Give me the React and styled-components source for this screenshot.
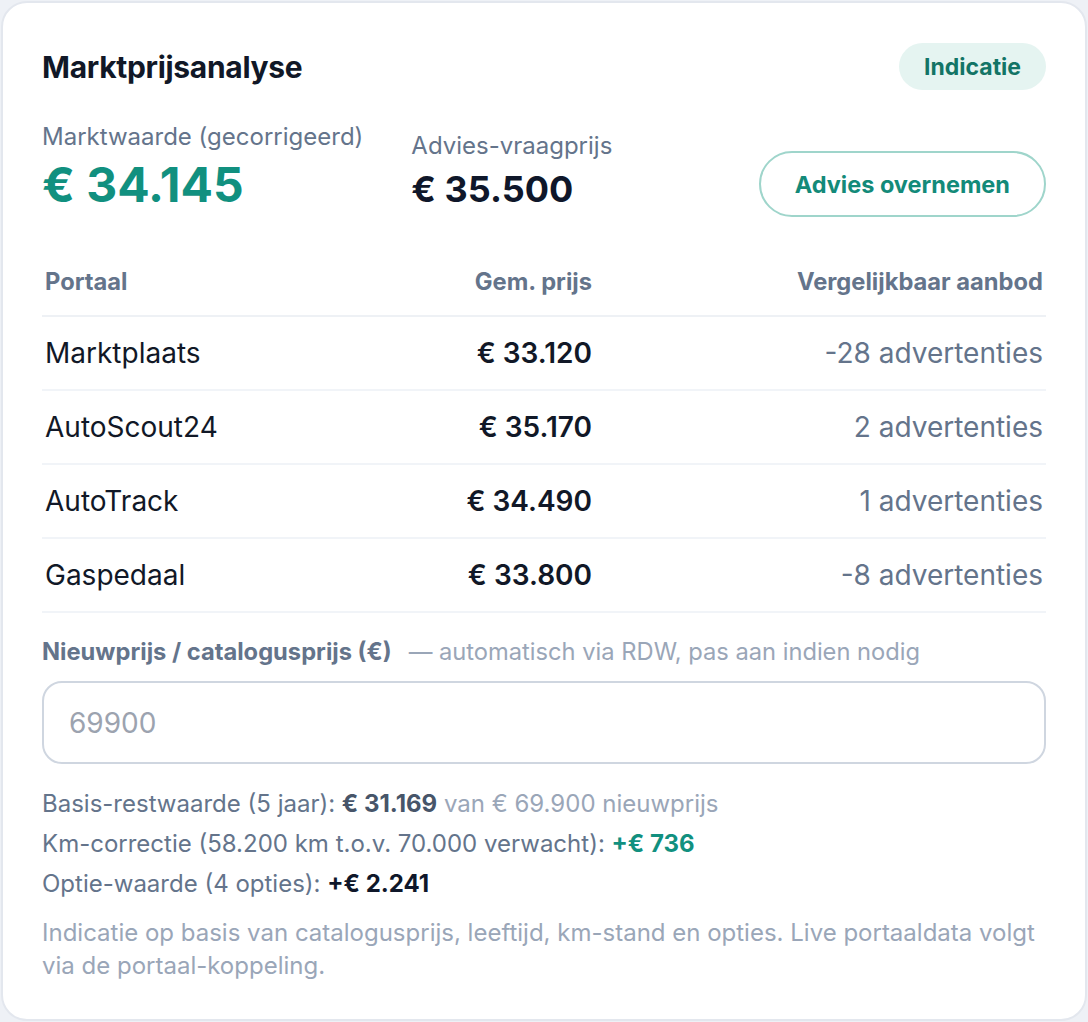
import React from "react";
import styled, { createGlobalStyle } from "styled-components";

const GlobalStyle = createGlobalStyle`
  * { box-sizing: border-box; }
  html, body { margin: 0; padding: 0; background: #eef1f6; }
  body { font-family: Inter, "Noto Sans", "Liberation Sans", sans-serif; color: #0f172a; }
`;

const Card = styled.section`
  width: 1086px;
  margin: 1px;
  background: #ffffff;
  border: 2px solid #e3e7ee;
  border-radius: 26px;
  padding: 40px 39px 37px;
`;

const Header = styled.header`
  display: flex;
  align-items: center;
  justify-content: space-between;
`;

const Title = styled.h2`
  margin: 0;
  font-size: 30px;
  font-weight: 700;
  letter-spacing: -0.3px;
  color: #111827;
`;

const Badge = styled.span`
  display: inline-flex;
  align-items: center;
  height: 47px;
  padding: 0 25px;
  border-radius: 999px;
  background: #e5f4f1;
  color: #137466;
  font-size: 23px;
  font-weight: 700;
`;

const Summary = styled.div`
  display: flex;
  align-items: flex-end;
  gap: 48px;
  margin-top: 32px;
`;

const Figure = styled.div`
  display: flex;
  flex-direction: column;
`;

const FigureLabel = styled.span`
  font-size: 24px;
  color: #64748b;
  line-height: 30px;
`;

const FigureValue = styled.span`
  font-size: ${(p) => (p.$large ? "48px" : "36px")};
  font-weight: 700;
  color: ${(p) => (p.$accent ? "#11907f" : "#0f172a")};
  line-height: ${(p) => (p.$large ? "65px" : "56px")};
`;

const Push = styled.div`
  flex: 1;
`;

const OutlineButton = styled.button`
  height: 66px;
  padding: 0 34px;
  border-radius: 999px;
  border: 2px solid #9fd5cb;
  background: #ffffff;
  color: #138a79;
  font-family: inherit;
  font-size: 23.5px;
  font-weight: 700;
  cursor: pointer;
`;

const Table = styled.div`
  margin-top: 32px;
  display: grid;
  grid-template-columns: minmax(0, 1fr) 200px 451px;
`;

const HeadCell = styled.div`
  padding: 18px 3px;
  line-height: 30px;
  font-size: 23.7px;
  font-weight: 700;
  color: #64748b;
  text-align: ${(p) => p.$align || "left"};
  border-bottom: 2px solid #eef1f5;
`;

const Cell = styled.div`
  height: 74px;
  display: flex;
  align-items: center;
  justify-content: ${(p) => (p.$align === "right" ? "flex-end" : "flex-start")};
  padding: 0 3px;
  font-size: 28px;
  font-weight: ${(p) => (p.$strong ? 600 : 400)};
  color: ${(p) => (p.$muted ? "#64748b" : "#111827")};
  border-bottom: 2px solid #f1f4f8;
`;

const FieldLabel = styled.div`
  margin-top: 24px;
  font-size: 23.7px;
  line-height: 30px;
  color: #64748b;
  font-weight: 700;
`;

const Hint = styled.span`
  margin-left: 17px;
  font-weight: 400;
  color: #9aa6b8;
`;

const PriceInput = styled.input`
  display: block;
  width: 100%;
  height: 83px;
  margin-top: 14px;
  padding: 0 25px;
  border: 2px solid #cfd6e0;
  border-radius: 20px;
  font-family: inherit;
  font-size: 28px;
  color: #0f172a;
  outline: none;
  &::placeholder { color: #9ca3af; }
`;

const Breakdown = styled.div`
  margin-top: 20px;
  display: flex;
  flex-direction: column;
`;

const Line = styled.div`
  font-size: 24px;
  line-height: 40px;
  color: #64748b;
`;

const Amount = styled.strong`
  font-weight: 700;
  color: ${(p) => p.$tone === "accent" ? "#11907f" : p.$tone === "dark" ? "#0f172a" : "#475569"};
`;

const Faint = styled.span`
  color: #9aa6b8;
`;

const Note = styled.p`
  margin: 12px 0 0;
  font-size: 24px;
  line-height: 33px;
  color: #9aa6b8;
`;

const portals = [
  { name: "Marktplaats", price: "€ 33.120", offers: "-28 advertenties" },
  { name: "AutoScout24", price: "€ 35.170", offers: "2 advertenties" },
  { name: "AutoTrack", price: "€ 34.490", offers: "1 advertenties" },
  { name: "Gaspedaal", price: "€ 33.800", offers: "-8 advertenties" },
];

export default function App() {
  return (
    <>
      <GlobalStyle />
      <Card>
        <Header>
          <Title>Marktprijsanalyse</Title>
          <Badge>Indicatie</Badge>
        </Header>

        <Summary>
          <Figure>
            <FigureLabel>Marktwaarde (gecorrigeerd)</FigureLabel>
            <FigureValue $large $accent>€ 34.145</FigureValue>
          </Figure>
          <Figure>
            <FigureLabel>Advies-vraagprijs</FigureLabel>
            <FigureValue>€ 35.500</FigureValue>
          </Figure>
          <Push />
          <OutlineButton>Advies overnemen</OutlineButton>
        </Summary>

        <Table>
          <HeadCell>Portaal</HeadCell>
          <HeadCell $align="right">Gem. prijs</HeadCell>
          <HeadCell $align="right">Vergelijkbaar aanbod</HeadCell>
          {portals.map((p) => (
            <React.Fragment key={p.name}>
              <Cell>{p.name}</Cell>
              <Cell $align="right" $strong>{p.price}</Cell>
              <Cell $align="right" $muted>{p.offers}</Cell>
            </React.Fragment>
          ))}
        </Table>

        <FieldLabel>
          Nieuwprijs / catalogusprijs (€)
          <Hint>— automatisch via RDW, pas aan indien nodig</Hint>
        </FieldLabel>
        <PriceInput type="text" placeholder="69900" />

        <Breakdown>
          <Line>
            Basis-restwaarde (5 jaar): <Amount>€ 31.169</Amount> <Faint>van € 69.900 nieuwprijs</Faint>
          </Line>
          <Line>
            Km-correctie (58.200 km t.o.v. 70.000 verwacht): <Amount $tone="accent">+€ 736</Amount>
          </Line>
          <Line>
            Optie-waarde (4 opties): <Amount $tone="dark">+€ 2.241</Amount>
          </Line>
        </Breakdown>

        <Note>
          Indicatie op basis van catalogusprijs, leeftijd, km-stand en opties. Live portaaldata volgt via de portaal-koppeling.
        </Note>
      </Card>
    </>
  );
}
